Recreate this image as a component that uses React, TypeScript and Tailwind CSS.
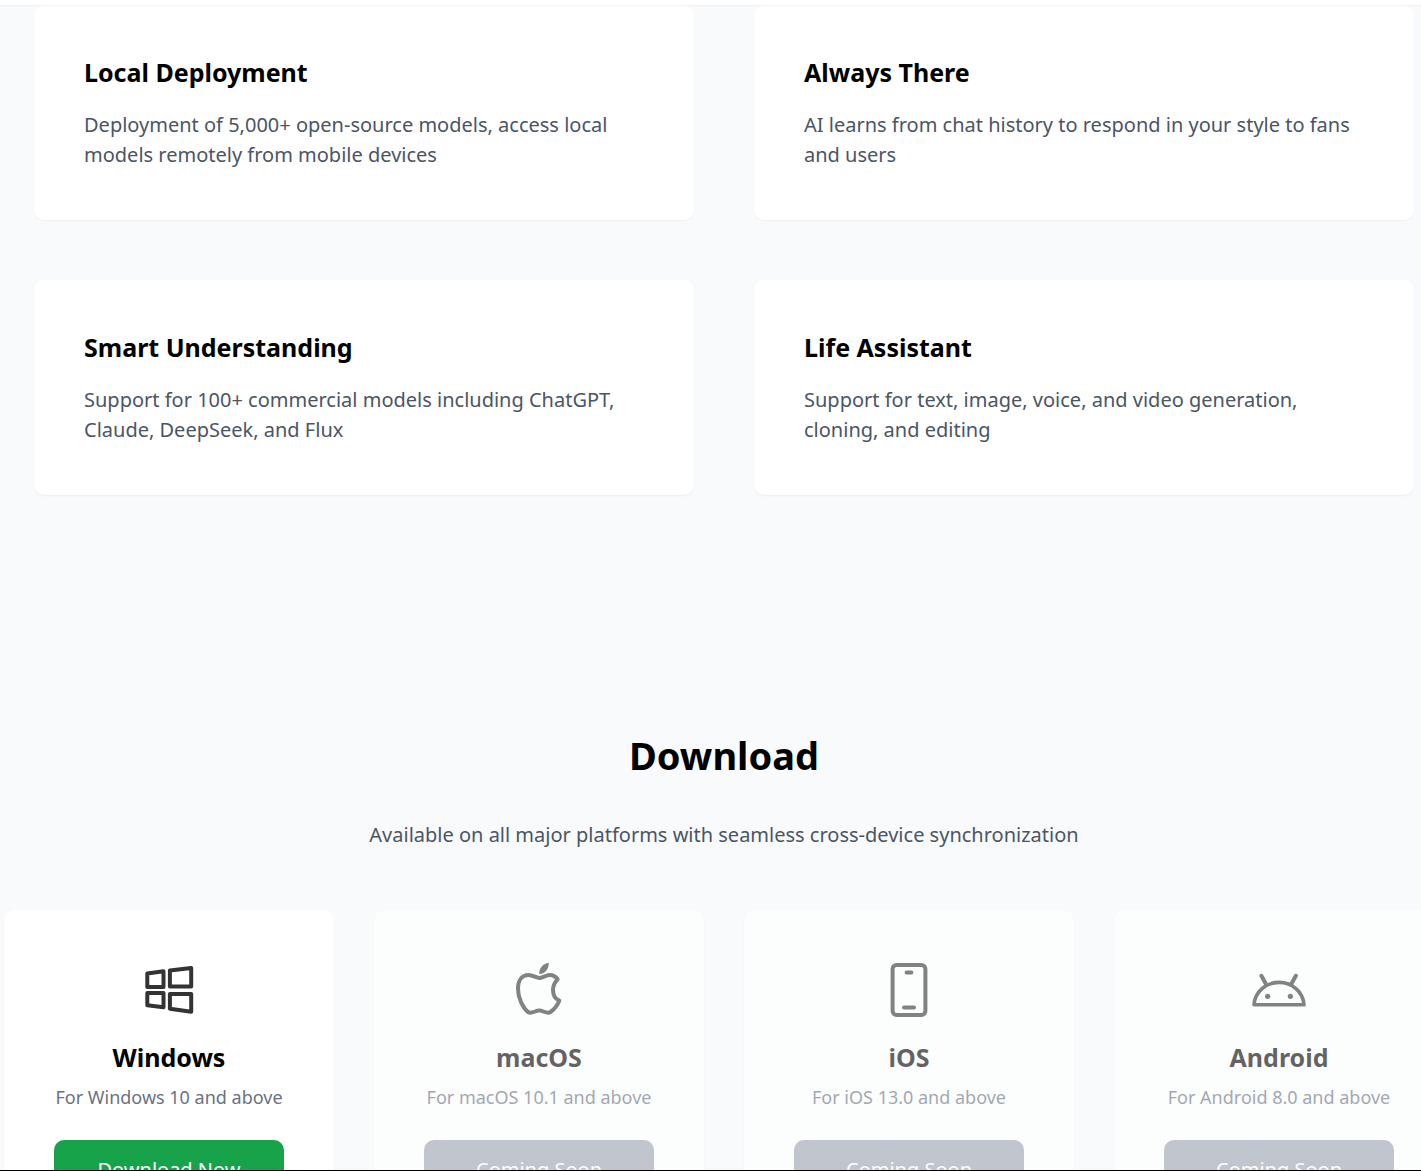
import type { ReactNode } from "react"

const features = [
  {
    title: "Local Deployment",
    text: "Deployment of 5,000+ open-source models, access local models remotely from mobile devices",
  },
  {
    title: "Always There",
    text: "AI learns from chat history to respond in your style to fans and users",
  },
  {
    title: "Smart Understanding",
    text: "Support for 100+ commercial models including ChatGPT, Claude, DeepSeek, and Flux",
  },
  {
    title: "Life Assistant",
    text: "Support for text, image, voice, and video generation, cloning, and editing",
  },
]

const Icon = ({ children }: { children: ReactNode }) => (
  <svg
    className="size-[60px] text-[#333333]"
    viewBox="0 0 60 60"
    fill="none"
    stroke="currentColor"
    strokeWidth="4"
    strokeLinecap="round"
    strokeLinejoin="round"
    aria-hidden="true"
  >
    {children}
  </svg>
)

const WindowsIcon = () => (
  <Icon>
    <path d="M8.3 13.4 24.5 11.3V26.9H8.3Z" />
    <path d="M30.9 10.5 52.2 8V26.5H30.9Z" />
    <path d="M8.3 33H24.5V47.2L8.3 45.2Z" />
    <path d="M30.9 34H52.2V51.7L30.9 48.7Z" />
  </Icon>
)

const AppleIcon = () => (
  <Icon>
    <path d="M30.3 18C27 18 24 15 19.5 15C13 15 9 20.5 9 29C9 38 14 48 19 52C22.5 54.5 26 50.5 30.3 50.5C34.5 50.5 38 54.5 41.5 52C45 49.5 48.5 45 50.3 40.7C46.5 39 44 35 44 30C44 25.5 46 22 48.6 19.3C46.5 16.5 44 15 41 15C37 15 33.5 18 30.3 18Z" />
    <path d="M30.3 14C30 8 33.5 4 39.7 2.7C40 8.5 36.5 13.5 30.3 14Z" fill="currentColor" stroke="none" />
  </Icon>
)

const PhoneIcon = () => (
  <Icon>
    <rect x="13.6" y="4.9" width="32.8" height="50" rx="4" />
    <path d="M27.6 12.4H32.4M25 47.5H35" />
  </Icon>
)

const AndroidIcon = () => (
  <Icon>
    <path d="M5 44.8C5.8 32 16.5 22.4 30 22.4S54.2 32 55 44.8Z" strokeWidth="3.6" />
    <path d="M12.4 15.8 16.6 23.5M46.9 15.8 42.6 23.5" />
    <circle cx="18.7" cy="36.3" r="2.6" fill="currentColor" stroke="none" />
    <circle cx="41.4" cy="36.3" r="2.6" fill="currentColor" stroke="none" />
  </Icon>
)

const platforms = [
  { name: "Windows", note: "For Windows 10 and above", icon: <WindowsIcon />, available: true },
  { name: "macOS", note: "For macOS 10.1 and above", icon: <AppleIcon />, available: false },
  { name: "iOS", note: "For iOS 13.0 and above", icon: <PhoneIcon />, available: false },
  { name: "Android", note: "For Android 8.0 and above", icon: <AndroidIcon />, available: false },
]

const App = () => {
  return (
    <div className="flex h-screen flex-col overflow-hidden border-b border-black bg-[#f9fafc] font-['Segoe_UI','Noto_Sans',sans-serif] text-black">
      <header className="z-10 h-[5px] shrink-0 bg-white shadow-xs"></header>
      {/* the content is a little wider than the window */}
      <main className="w-[calc(100%+27px)] shrink-0">
        <section className="mx-auto grid max-w-[1380px] grid-cols-2 gap-[60px]">
          {features.map((feature) => (
            <div key={feature.title} className="rounded-[10px] bg-white p-[50px] shadow-xs">
              <h3 className="mb-5 text-[25px] leading-[35px] font-bold">{feature.title}</h3>
              <p className="text-[20px] leading-[30px] text-gray-600">{feature.text}</p>
            </div>
          ))}
        </section>

        <section className="mx-auto max-w-[1440px] pt-[235px]">
          <h2 className="mb-10 text-center text-[38px] leading-[50px] font-bold">Download</h2>
          <p className="mb-[60px] text-center text-[20px] leading-[30px] text-gray-600">
            Available on all major platforms with seamless cross-device synchronization
          </p>
          <div className="grid grid-cols-4 gap-10">
            {platforms.map((platform) => (
              <div
                key={platform.name}
                className={`flex flex-col items-center rounded-[10px] bg-white p-[50px] shadow-xs ${platform.available ? "" : "opacity-60"}`}
              >
                {platform.icon}
                <h3 className="mt-5 text-[25px] leading-[35px] font-bold">{platform.name}</h3>
                <p className="mt-[10px] text-[18px] leading-[25px] whitespace-nowrap text-gray-500">{platform.note}</p>
                <button
                  disabled={!platform.available}
                  className={`mt-[30px] w-full rounded-[10px] py-[15px] text-[20px] leading-[30px] text-white ${platform.available ? "bg-[#16a34a]" : "bg-[#9ca3af]"}`}
                >
                  {platform.available ? "Download Now" : "Coming Soon"}
                </button>
              </div>
            ))}
          </div>
        </section>
      </main>
    </div>
  )
}

export default App
